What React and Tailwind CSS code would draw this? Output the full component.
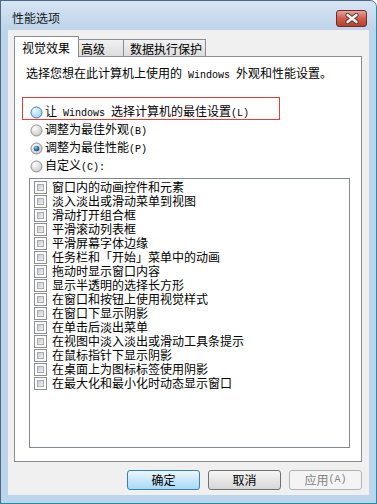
import React from 'react';

const items = [
  '窗口内的动画控件和元素',
  '淡入淡出或滑动菜单到视图',
  '滑动打开组合框',
  '平滑滚动列表框',
  '平滑屏幕字体边缘',
  '任务栏和「开始」菜单中的动画',
  '拖动时显示窗口内容',
  '显示半透明的选择长方形',
  '在窗口和按钮上使用视觉样式',
  '在窗口下显示阴影',
  '在单击后淡出菜单',
  '在视图中淡入淡出或滑动工具条提示',
  '在鼠标指针下显示阴影',
  '在桌面上为图标标签使用阴影',
  '在最大化和最小化时动态显示窗口',
];

function Lat({ children }) {
  return <span className="font-['Liberation_Mono'] text-[10px] whitespace-pre">{children}</span>;
}

function Radio({ state }) {
  const hover = state === 'hover';
  return (
    <svg width="13" height="13" viewBox="0 0 13 13" className="shrink-0">
      <defs>
        <radialGradient id="rn" cx="0.35" cy="0.3" r="0.8">
          <stop offset="0" stopColor="#ffffff" />
          <stop offset="1" stopColor="#c4c4c4" />
        </radialGradient>
        <radialGradient id="rh" cx="0.35" cy="0.3" r="0.8">
          <stop offset="0" stopColor="#f2fbff" />
          <stop offset="1" stopColor="#92cdef" />
        </radialGradient>
        <radialGradient id="rd" cx="0.4" cy="0.35" r="0.7">
          <stop offset="0" stopColor="#8fd6fa" />
          <stop offset="0.6" stopColor="#1e6aa6" />
          <stop offset="1" stopColor="#0d3e6b" />
        </radialGradient>
      </defs>
      <circle cx="6.5" cy="6.5" r="5.5" fill={hover ? 'url(#rh)' : 'url(#rn)'} stroke={hover ? '#3c7fb1' : '#8e8f8f'} />
      {state === 'checked' && <circle cx="6.5" cy="6.5" r="2.8" fill="url(#rd)" />}
    </svg>
  );
}

function Check() {
  return (
    <div className="w-[13px] h-[13px] shrink-0 border border-[#8e8f8f] bg-white p-[2px]">
      <div className="w-full h-full border border-[#a9adb3] bg-gradient-to-br from-[#c8ccd1] to-[#f2f2f2]" />
    </div>
  );
}

export default function App() {
  const radios = [
    { state: 'hover', label: <>让<Lat> Windows </Lat>选择计算机的最佳设置<Lat>(L)</Lat></> },
    { state: 'normal', label: <>调整为最佳外观<Lat>(B)</Lat></> },
    { state: 'checked', label: <>调整为最佳性能<Lat>(P)</Lat></> },
    { state: 'normal', label: <>自定义<Lat>(C):</Lat></> },
  ];

  return (
    <div className="w-[377px] h-[504px] flex flex-col bg-[#bcd4ec] border border-[#4d6a84] border-b-[#1492a6] border-r-[#2f8aa2] rounded-tr-[7px] overflow-hidden text-[12px] leading-[14px] text-black font-['Noto_Sans_CJK_SC',sans-serif]">
      {/* title bar */}
      <div className="h-[29px] shrink-0 flex items-start bg-gradient-to-b from-[#d7e4f3] to-[#bfd4ea]">
        <div className="pl-[11px] pt-[10px] text-[#111a24]">性能选项</div>
        <div className="flex-1" />
        <div className="mt-[9px] mr-[9px] w-[31px] h-[17px] rounded-[3px] border border-[#6f2a25] bg-gradient-to-b from-[#e4a497] via-[#cf5d4c] to-[#b9402c] flex items-center justify-center">
          <svg width="14" height="11" viewBox="0 0 14 11">
            <path d="M2.5 2 L11.5 9 M11.5 2 L2.5 9" stroke="#5a3c38" strokeWidth="4.2" strokeLinecap="round" />
            <path d="M2.5 2 L11.5 9 M11.5 2 L2.5 9" stroke="#f4f4f4" strokeWidth="2.4" strokeLinecap="round" />
          </svg>
        </div>
      </div>

      {/* frame sides */}
      <div className="flex-1 flex px-[7px] pb-[8px]">
        <div className="flex-1 flex flex-col bg-[#f0f0f0] pl-[6px] pr-[7px] pt-[6px]">
          {/* tabs */}
          <div className="h-[20px] flex items-end shrink-0">
            <div className="relative z-10 -mb-px h-[21px] w-[65px] bg-white border border-b-0 border-[#898c95] pl-[7px] pt-[4px]">视觉效果</div>
            <div className="h-[17px] w-[45px] border-t border-r border-[#898c95] bg-gradient-to-b from-[#f2f2f2] to-[#dcdcdc] pl-[2px] pt-[2px]">高级</div>
            <div className="h-[17px] w-[82px] border-t border-r border-[#898c95] bg-gradient-to-b from-[#f2f2f2] to-[#dcdcdc] pl-[6px] pt-[2px]">数据执行保护</div>
          </div>

          {/* panel */}
          <div className="relative w-[348px] h-[406px] shrink-0 bg-white border border-[#898c95] flex flex-col">
            <div className="mt-[9px] pl-[11px] h-[14px] whitespace-nowrap">
              选择您想在此计算机上使用的<Lat> Windows </Lat>外观和性能设置。
            </div>
            <div className="mt-[23px] flex flex-col">
              {radios.map((r, i) => (
                <div key={i} className="h-[18px] flex items-center pl-[15px] gap-[2px] whitespace-nowrap">
                  <Radio state={r.state} />
                  <span className="leading-[14px]">{r.label}</span>
                </div>
              ))}
            </div>
            <div className="mt-[3px] ml-[14px] w-[321px] h-[270px] border border-[#828790] bg-white pt-[1px]">
              {items.map((t) => (
                <div key={t} className="h-[14px] flex items-center pl-[4px] gap-[5px] whitespace-nowrap">
                  <Check />
                  <span className="leading-[14px]">{t}</span>
                </div>
              ))}
            </div>
            <div className="absolute left-[7px] top-[40px] w-[258px] h-[23px] border border-[#e8393b] pointer-events-none" />
          </div>

          {/* buttons */}
          <div className="mt-[8px] flex justify-end gap-[8px]">
            <div className="w-[73px] h-[20px] rounded-[3px] border border-[#3c7fb1] bg-gradient-to-b from-[#eaf6fd] to-[#a7d9f5] flex items-center justify-center">确定</div>
            <div className="w-[73px] h-[20px] rounded-[3px] border border-[#707070] bg-gradient-to-b from-[#f6f6f6] to-[#d6d6d6] flex items-center justify-center">取消</div>
            <div className="w-[73px] h-[20px] rounded-[3px] border border-[#adb2b5] bg-[#f4f4f4] text-[#838383] flex items-center justify-center">应用<Lat>(A)</Lat></div>
          </div>
        </div>
      </div>
    </div>
  );
}
